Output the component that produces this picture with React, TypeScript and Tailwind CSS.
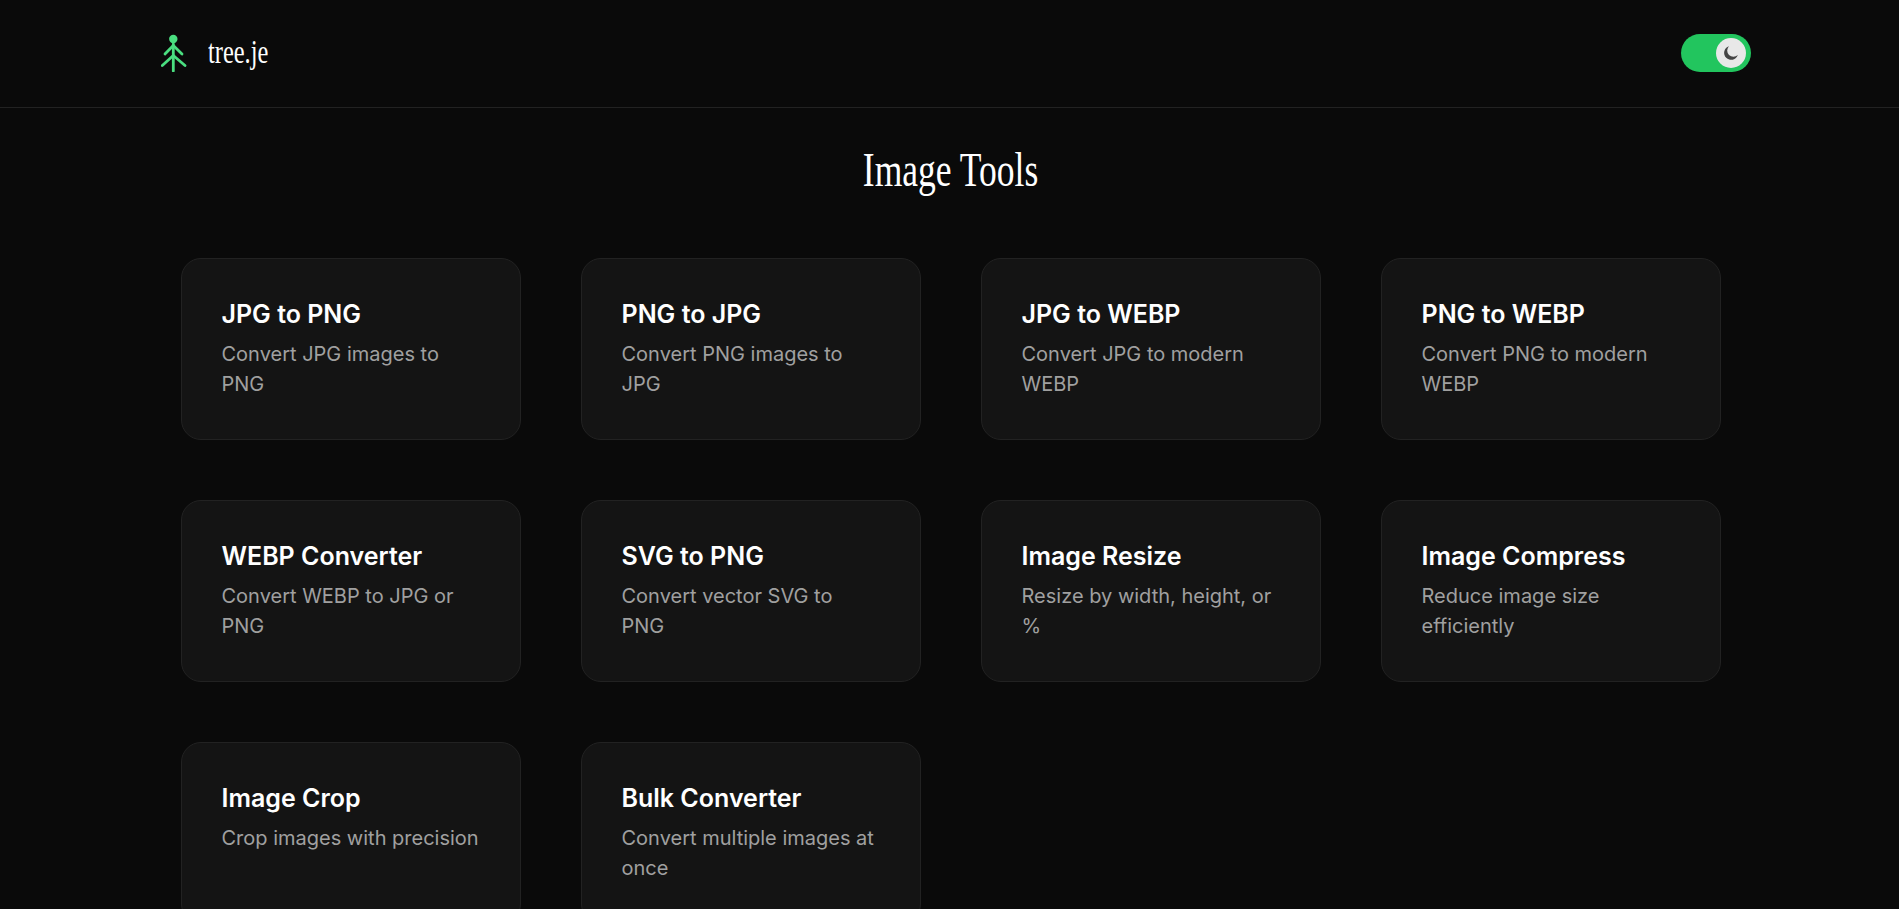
const tools = [
  { title: "JPG to PNG", desc: "Convert JPG images to PNG" },
  { title: "PNG to JPG", desc: "Convert PNG images to JPG" },
  { title: "JPG to WEBP", desc: "Convert JPG to modern WEBP" },
  { title: "PNG to WEBP", desc: "Convert PNG to modern WEBP" },
  { title: "WEBP Converter", desc: "Convert WEBP to JPG or PNG" },
  { title: "SVG to PNG", desc: "Convert vector SVG to PNG" },
  { title: "Image Resize", desc: "Resize by width, height, or %" },
  { title: "Image Compress", desc: "Reduce image size efficiently" },
  { title: "Image Crop", desc: "Crop images with precision" },
  { title: "Bulk Converter", desc: "Convert multiple images at once" },
];

const Logo = () => (
  <svg width="26" height="38" viewBox="0 0 26 38" fill="none" stroke="#4ade80" strokeWidth="2.8" strokeLinecap="round">
    <circle cx="12.3" cy="5" r="4.2" fill="#4ade80" stroke="none" />
    <path d="M12.3 10V37" />
    <path d="M12.3 11.5L4 20M12.3 11.5L21 20" />
    <path d="M12.3 21.5L1.3 31.5M12.3 21.5L24 31.5" />
  </svg>
);

const App = () => {
  return (
    <div className="h-screen overflow-hidden bg-[#0a0a0a] text-white font-['Inter',sans-serif]">
      <header className="h-[108px] border-b border-[#222222] pl-[3px]">
        <div className="mx-auto flex h-full w-[1600px] items-center justify-between pb-[2px] pl-[10px]">
          <div className="flex items-center gap-[21px]">
            <Logo />
            <span className="w-[60px] origin-left scale-x-[0.74] font-['Liberation_Serif',serif] text-[33px] leading-none whitespace-nowrap">
              tree.je
            </span>
          </div>
          <button className="flex h-[38px] w-[70px] items-center justify-end rounded-full bg-[#22c55e] pr-[5px]">
            <span className="flex h-[30px] w-[30px] items-center justify-center rounded-full bg-[#e8e8e8]">
              <svg width="16" height="16" viewBox="0 0 16 16">
                <path d="M6 1.2A7 7 0 1 0 14.8 10 6.2 6.2 0 0 1 6 1.2Z" fill="#444444" />
              </svg>
            </span>
          </button>
        </div>
      </header>
      <main className="pl-[3px]">
        <h1 className="mt-[28px] text-center">
          <span className="inline-block scale-x-[0.74] font-['Liberation_Serif',serif] text-[48px] leading-[68px] font-normal whitespace-nowrap">
            Image Tools
          </span>
        </h1>
        <div className="mx-auto mt-[54px] grid w-[1540px] grid-cols-4 gap-[60px]">
          {tools.map((tool) => (
            <div key={tool.title} className="h-[182px] rounded-[20px] border border-[#222222] bg-[#141414] p-[40px] pl-[39.5px]">
              <h3 className="text-[25px] leading-[30px] font-semibold text-white">{tool.title}</h3>
              <p className="mt-[10px] text-[20px] leading-[30px] text-[#a0a0a0]">{tool.desc}</p>
            </div>
          ))}
        </div>
      </main>
    </div>
  );
};

export default App;
